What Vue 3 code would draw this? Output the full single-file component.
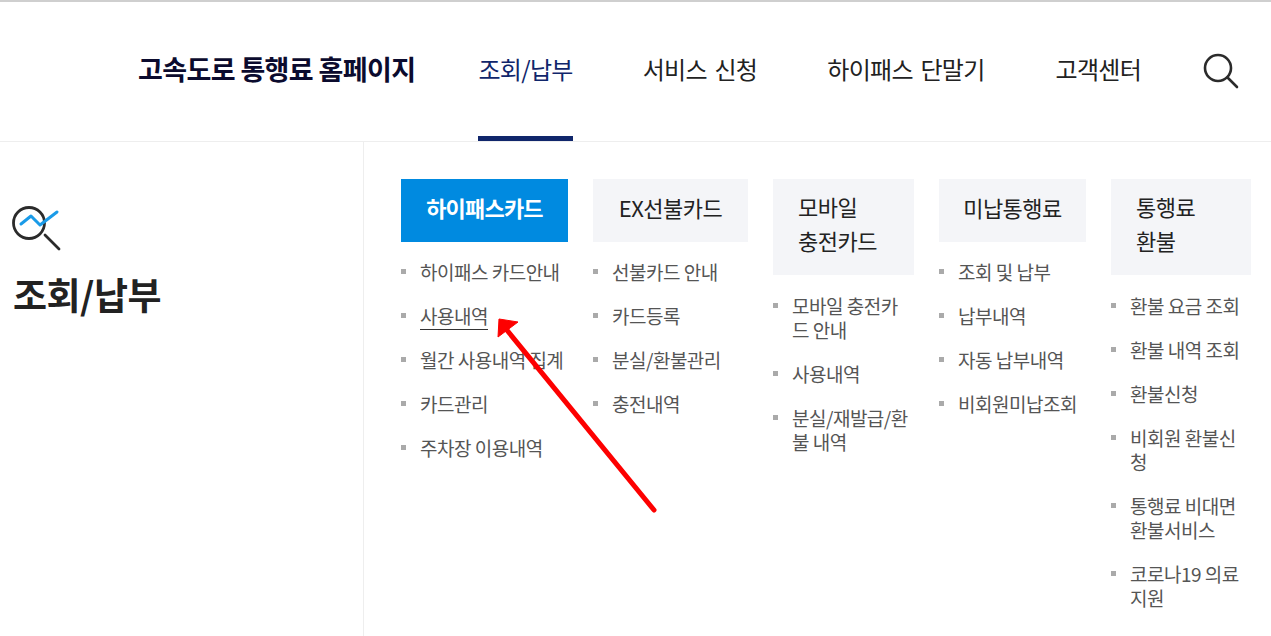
<script setup>
const nav = ['서비스 신청', '하이패스 단말기', '고객센터']
const columns = [
  { title: '하이패스카드', active: true, width: 167, items: ['하이패스 카드안내', '사용내역', '월간 사용내역 집계', '카드관리', '주차장 이용내역'] },
  { title: 'EX선불카드', width: 155, items: ['선불카드 안내', '카드등록', '분실/환불관리', '충전내역'] },
  { title: '모바일 충전카드', wrap: true, width: 141, items: ['모바일 충전카드 안내', '사용내역', '분실/재발급/환불 내역'] },
  { title: '미납통행료', width: 147, items: ['조회 및 납부', '납부내역', '자동 납부내역', '비회원미납조회'] },
  { title: '통행료 환불', wrap: true, width: 140, items: ['환불 요금 조회', '환불 내역 조회', '환불신청', '비회원 환불신청', '통행료 비대면 환불서비스', '코로나19 의료 지원'] },
]
</script>

<template>
  <div class="page">
    <header class="header">
      <h1 class="brand">고속도로 통행료 홈페이지</h1>
      <nav class="nav">
        <a class="nav-item active"><span>조회/납부</span></a>
        <a v-for="n in nav" :key="n" class="nav-item"><span>{{ n }}</span></a>
      </nav>
      <svg class="search" width="36" height="36" viewBox="0 0 36 36" fill="none" stroke="#2b2b2b" stroke-width="2.6" stroke-linecap="round">
        <circle cx="15" cy="15" r="13" />
        <path d="M24.5 24.5L34 34" />
      </svg>
    </header>
    <main class="body">
      <aside class="side">
        <svg class="side-icon" width="50" height="48" viewBox="0 0 50 48" fill="none" stroke-linecap="round">
          <circle cx="17" cy="18" r="15.5" stroke="#2b2b2b" stroke-width="2.8" />
          <path d="M33 30L47 44" stroke="#2b2b2b" stroke-width="2.8" />
          <path d="M9 19L19 11L28 20L45 7" stroke="#1a9be8" stroke-width="3" stroke-linejoin="round" />
        </svg>
        <h2 class="side-title">조회/납부</h2>
      </aside>
      <div class="columns">
        <section v-for="c in columns" :key="c.title" class="col" :style="{ width: c.width + 'px' }">
          <div class="head" :class="{ active: c.active, wrap: c.wrap }">{{ c.title }}</div>
          <ul class="list">
            <li v-for="i in c.items" :key="i"><span :class="{ under: c.active && i === '사용내역' }">{{ i }}</span></li>
          </ul>
        </section>
      </div>
    </main>
    <svg class="arrow" width="1271" height="636" viewBox="0 0 1271 636" fill="none">
      <path d="M654 510L506 329" stroke="#fd0000" stroke-width="5" stroke-linecap="round" />
      <path d="M499 319L518 322L498 337Z" fill="#fd0000" stroke="#fd0000" stroke-width="1" />
    </svg>
  </div>
</template>

<style>
html, body { margin: 0; background: #fff; overflow: hidden; }
</style>

<style scoped>
.page {
  position: relative;
  width: 1271px;
  height: 636px;
  overflow: hidden;
  font-family: "Noto Sans CJK KR", "Noto Sans", sans-serif;
  color: #222;
}
.header {
  display: flex;
  align-items: center;
  height: 139px;
  padding-left: 138px;
  border-top: 2px solid #cfcfcf;
  border-bottom: 1px solid #eeeeee;
}
.brand {
  margin: 0 63px 6px 0;
  font-size: 27px;
  font-weight: 700;
  letter-spacing: -0.62px;
  line-height: 40px;
  color: #0b0b2e;
  white-space: nowrap;
}
.nav { display: flex; gap: 70px; height: 100%; }
.nav-item {
  display: flex;
  align-items: center;
  height: 100%;
  box-sizing: border-box;
  padding-bottom: 6px;
  font-size: 24px;
  color: #222;
  letter-spacing: -0.7px;
  word-spacing: 3px;
  white-space: nowrap;
}
.nav-item:last-child { margin-left: 1px; }
.nav-item.active {
  color: #10266b;
  box-shadow: inset 0 -5px 0 #10266b;
}
.search { margin-left: 62px; margin-bottom: 2px; }
.body { display: flex; height: 494px; }
.side {
  flex: none;
  width: 351px;
  border-right: 1px solid #eeeeee;
  padding: 63px 0 0 12px;
}
.side-icon { display: block; }
.side-title {
  margin: 14px 0 0 1px;
  font-size: 37px;
  font-weight: 700;
  letter-spacing: -0.5px;
  line-height: 54px;
  color: #222;
}
.columns { display: flex; gap: 25px; padding: 37px 0 0 37px; align-items: flex-start; }
.col { flex: none; }
.head {
  display: flex;
  align-items: center;
  justify-content: center;
  height: 63px;
  padding-bottom: 8px;
  box-sizing: border-box;
  background: #f4f5f8;
  font-size: 22px;
  letter-spacing: -0.5px;
  color: #222;
  word-break: keep-all;
}
.head.wrap {
  display: block;
  height: 96px;
  padding: 10px 25px;
  line-height: 34px;
}
.head.active { background: #008ae0; color: #fff; font-weight: 700; letter-spacing: -0.8px; }
.list { list-style: none; margin: 0; padding: 18px 0 0; }
.head.wrap + .list { padding-top: 19px; }
.list li {
  position: relative;
  padding-left: 19px;
  margin-bottom: 20px;
  font-size: 19px;
  line-height: 24px;
  letter-spacing: -0.5px;
  color: #555;
  word-break: break-all;
}
.list li::before {
  content: "";
  position: absolute;
  left: 0;
  top: 9px;
  width: 5px;
  height: 5px;
  background: #aaaaaa;
}
.under { border-bottom: 1px solid #333; }
.arrow { position: absolute; left: 0; top: 0; pointer-events: none; }
</style>
